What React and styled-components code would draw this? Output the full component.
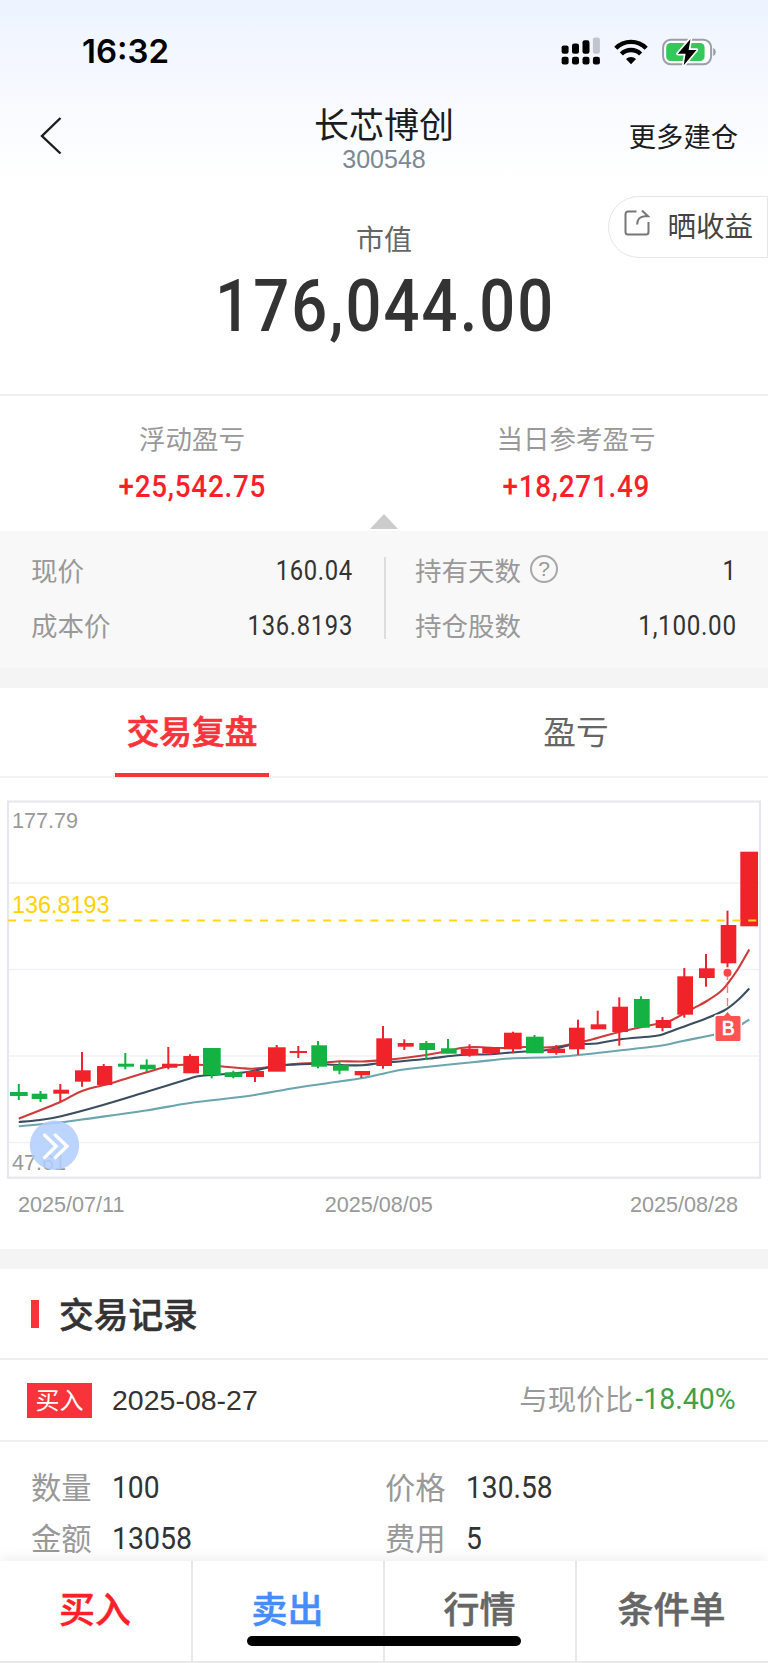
import React from 'react';
import styled, { createGlobalStyle } from 'styled-components';

const GlobalStyle = createGlobalStyle`
  * {
    box-sizing: border-box;
  }

  body {
    margin: 0;
    background: #fff;
    font-family: "Noto Sans CJK SC", sans-serif;
    color: #333;
  }
`;

const Screen = styled.div`
  width: 768px;
  height: 1663px;
  display: flex;
  flex-direction: column;
  overflow: hidden;
  background: #fff;
`;

const Header = styled.header`
  height: 182px;
  flex: none;
  background: linear-gradient(#edf4ff 0, #f2f6ff 45px, #ffffff 178px);
`;

const StatusBar = styled.div`
  height: 102px;
  padding: 0 50px 0 82px;
  display: flex;
  align-items: center;
  justify-content: space-between;
`;

const Clock = styled.span`
  font-family: Inter, sans-serif;
  font-size: 33px;
  font-weight: 600;
  line-height: 40px;
  color: #000;
`;

const StatusIcons = styled.div`
  display: flex;
  align-items: center;
  padding-top: 1px;

  svg + svg {
    margin-left: 13px;
  }

  svg:last-child {
    margin-left: 14px;
  }
`;

const NavBar = styled.div`
  height: 80px;
  padding: 0 30px 0 38px;
  display: grid;
  grid-template-columns: 120px 1fr 112px;
`;

const NavTitle = styled.div`
  text-align: center;
  padding: 0 24px 0 8px;
`;

const StockName = styled.h1`
  margin: 0;
  font-size: 35px;
  font-weight: 400;
  line-height: 42px;
  color: #1c1c1e;
`;

const StockCode = styled.div`
  font-family: "Liberation Sans", sans-serif;
  font-size: 25px;
  line-height: 30px;
  color: #7c8894;
`;

const BackButton = styled.div`
  padding-top: 14px;
`;

const NavAction = styled.div`
  font-size: 27.3px;
  line-height: 66px;
  text-align: right;
  white-space: nowrap;
  color: #1c1c1e;
`;

// condensed DIN style figures
const Figure = styled.span`
  display: inline-block;
  font-family: Roboto, sans-serif;
  font-size: ${props => props.$size || 28}px;
  font-weight: ${props => props.$weight || 400};
  letter-spacing: ${props => props.$spacing || 0}px;
  color: ${props => props.$color || '#333'};
  transform: scaleX(${props => props.$stretch || 0.85});
  transform-origin: ${props => props.$origin || 'center'} center;
  white-space: nowrap;
`;

const Summary = styled.section`
  position: relative;
  height: 214px;
  flex: none;
  padding-top: 37px;
  text-align: center;
  border-bottom: 2px solid #f0f0f0;
`;

const SummaryLabel = styled.div`
  font-size: 28px;
  line-height: 39px;
  color: #666;
`;

const SummaryValue = styled.div`
  padding-left: 3px;
  line-height: 97px;
`;

const ShareButton = styled.div`
  position: absolute;
  top: 14px;
  right: 0;
  width: 160px;
  height: 62px;
  padding: 0 14px 5px 15px;
  display: flex;
  align-items: center;
  justify-content: space-between;
  border: 1px solid #e6e6e6;
  border-radius: 31px 0 0 31px;
  background: #fff;
  font-size: 28.5px;
  color: #444;

  svg {
    margin-bottom: 3px;
  }
`;

const Profits = styled.section`
  position: relative;
  height: 135px;
  flex: none;
  padding-top: 22px;
  display: grid;
  grid-template-columns: 1fr 1fr;
  text-align: center;
`;

const ProfitLabel = styled.div`
  font-size: 26.5px;
  line-height: 40px;
  color: #999;
`;

const ProfitValue = styled.div`
  line-height: 58px;
`;

const Arrow = styled.div`
  position: absolute;
  left: 370px;
  bottom: 2px;
  border: 14px solid transparent;
  border-top: 0;
  border-bottom: 15px solid #ccc;
`;

const Holding = styled.section`
  height: 137px;
  flex: none;
  padding: 11px 31px 0 31px;
  display: grid;
  grid-template-columns: 322px 1px 1fr;
  background: #f8f8f8;
`;

const HoldingRow = styled.div`
  height: 55px;
  display: flex;
  align-items: center;
  color: #999;
  font-size: 26.5px;
`;

const HoldingColumn = styled.div`
  padding-left: ${props => props.$indent || 0}px;

  ${Figure} {
    margin-left: auto;
    padding-top: 2px;
  }
`;

const HoldingDivider = styled.div`
  width: 2px;
  height: 82px;
  margin: 15px 0 0 31px;
  background: #ddd;
`;

const Help = styled.span`
  width: 28px;
  height: 28px;
  margin: 0 0 2px 9px;
  border: 2px solid #a8a8a8;
  border-radius: 50%;
  font-family: "Liberation Sans", sans-serif;
  font-size: 21px;
  line-height: 24px;
  text-align: center;
`;

const Band = styled.div`
  height: 20px;
  flex: none;
  background: #f4f4f4;
`;

const Tabs = styled.nav`
  height: 90px;
  flex: none;
  display: grid;
  grid-template-columns: 1fr 1fr;
  justify-items: center;
  border-bottom: 2px solid #f3f3f5;
`;

const Tab = styled.div`
  width: 154px;
  height: 89px;
  line-height: 83px;
  font-size: 32.7px;
  font-weight: ${props => (props.$active ? 500 : 400)};
  color: ${props => (props.$active ? '#f9333a' : '#666')};
  border-bottom: 4px solid ${props => (props.$active ? '#f9333a' : 'transparent')};
  -webkit-text-stroke: ${props => (props.$active ? 0.7 : 0)}px;
  text-align: center;
`;

const ChartPanel = styled.section`
  height: 471px;
  flex: none;
  padding-top: 17px;
`;

const ChartSvg = styled.svg`
  display: block;
`;

const Dates = styled.div`
  padding: 0 30px 0 18px;
  display: flex;
  justify-content: space-between;
  font-family: "Liberation Sans", sans-serif;
  font-size: 21.6px;
  line-height: 40px;
  color: #999;

  span:nth-child(2) {
    padding-left: 3px;
  }
`;

const RecordTitle = styled.h2`
  height: 91px;
  flex: none;
  margin: 0;
  padding: 0 0 2px 31px;
  display: flex;
  align-items: center;
  gap: 20px;
  font-size: 34.7px;
  font-weight: 500;
  -webkit-text-stroke: 0.5px;
  border-bottom: 2px solid #eee;

  &::before {
    content: "";
    width: 8px;
    height: 28px;
    margin-top: 2px;
    background: #f9333a;
  }
`;

const RecordHead = styled.div`
  height: 82px;
  flex: none;
  padding: 0 32px 0 27px;
  display: flex;
  align-items: center;
  border-bottom: 2px solid #f0f0f0;
`;

const Badge = styled.span`
  width: 65px;
  height: 35px;
  line-height: 32px;
  text-align: center;
  background: #f9333a;
  color: #fff;
  font-size: 24px;
`;

const RecordDate = styled.span`
  margin: 0 auto 0 20px;
  font-family: "Liberation Sans", sans-serif;
  font-size: 28.5px;
`;

const Compare = styled.span`
  display: flex;
  align-items: center;
  padding-bottom: 6px;
  font-size: 28.5px;
  color: #999;

  ${Figure} {
    margin-left: -3px;
    padding-top: 2px;
  }
`;

const RecordBody = styled.div`
  flex: 1;
  min-height: 0;
  overflow: hidden;
  padding: 18px 31px 0;
  display: grid;
  grid-template-columns: 354px 1fr;
  grid-auto-rows: 51px;
  align-content: start;
`;

const Field = styled.div`
  display: flex;
  align-items: center;
  gap: 20px;
  font-size: 30.3px;
  color: #999;

  ${Figure} {
    padding-top: 3px;
  }
`;

const BottomBar = styled.footer`
  position: relative;
  height: 102px;
  flex: none;
  display: grid;
  grid-template-columns: repeat(4, 1fr);
  background: #fff;
  border-bottom: 2px solid #e8e8e8;
  box-shadow: 0 -3px 12px rgba(0, 0, 0, 0.07);
`;

const BottomItem = styled.div`
  padding-right: 2px;
  line-height: 93px;
  text-align: center;
  font-size: 36px;
  font-weight: 500;
  -webkit-text-stroke: 0.5px;
  color: ${props => props.$color || '#666'};

  & + & {
    margin-left: -1px;
    border-left: 2px solid #e8e8e8;
  }
`;

const HomeIndicator = styled.span`
  position: absolute;
  left: 247px;
  bottom: 15px;
  width: 274px;
  height: 10px;
  border-radius: 5px;
  background: #000;
`;

const RED = '#f0232b';
const GREEN = '#14b143';

// left, right, top, bottom of the body, then wick x, high, low
const candles = [
  [GREEN, 10, 27.7, 1092, 1096, 18.8, 1084, 1100],
  [GREEN, 31.7, 47.3, 1093.7, 1099, 40.5, 1091, 1102],
  [RED, 53.3, 69, 1089.7, 1093.7, 60.3, 1084, 1102],
  [RED, 75, 90.7, 1070.3, 1081.7, 82, 1052, 1086.7],
  [RED, 97, 112.3, 1066, 1085, 103.7, 1064, 1085],
  [GREEN, 118, 134, 1063.7, 1066.7, 125.3, 1053, 1069.3],
  [GREEN, 140, 155.7, 1064.7, 1069.3, 146.7, 1059.3, 1072],
  [RED, 162, 177.3, 1063.7, 1067.7, 168.3, 1047, 1069.3],
  [RED, 183.3, 199, 1056, 1073.3, 190, 1054.3, 1073],
  [GREEN, 203, 220.7, 1048, 1075, 211.7, 1048, 1078.3],
  [GREEN, 224.7, 242.3, 1072.3, 1077, 233.3, 1070.7, 1078.3],
  [RED, 246, 264, 1071, 1077, 255, 1069, 1082],
  [RED, 268, 285.7, 1047.3, 1071.7, 276.7, 1045, 1071],
  [RED, 289.7, 307, 1051, 1053, 298.3, 1046, 1058],
  [GREEN, 311.3, 327, 1045.3, 1066.7, 318, 1041, 1068.3],
  [GREEN, 333, 348.7, 1065, 1070.7, 339.5, 1062, 1074.3],
  [RED, 354.7, 370, 1071, 1075.3, 361.3, 1071, 1078],
  [RED, 376.3, 392, 1038.3, 1066, 383, 1026, 1068.7],
  [RED, 397.7, 413.7, 1043, 1046.7, 404.3, 1039.3, 1050],
  [GREEN, 419.3, 435, 1043, 1050, 426.3, 1041, 1060],
  [GREEN, 441, 456.7, 1048.3, 1053.7, 448, 1039, 1053],
  [RED, 460.7, 478.3, 1048.7, 1055, 469.5, 1044.3, 1056.7],
  [RED, 482.3, 500, 1047, 1053.3, 491, 1047, 1055],
  [RED, 504, 521.7, 1032.7, 1049.3, 513, 1031.7, 1053.3],
  [GREEN, 526, 543.7, 1036.7, 1053.3, 534.5, 1035, 1053],
  [RED, 547.3, 565, 1048.7, 1053, 556.3, 1045, 1054.7],
  [RED, 569, 584.7, 1027.7, 1049.3, 578, 1019.7, 1054.7],
  [RED, 590.7, 606.3, 1024.3, 1029.3, 597.7, 1010.7, 1029],
  [RED, 612.3, 628, 1006.7, 1032, 619.3, 997.3, 1045.7],
  [GREEN, 634, 649.7, 999, 1027.7, 641, 996.3, 1027],
  [RED, 655.7, 671.3, 1020, 1028, 662.5, 1017, 1031.3],
  [RED, 677.3, 693, 976.3, 1014.7, 684.3, 968, 1017.7],
  [RED, 699, 714.7, 968.3, 978, 706, 954, 986.7],
  [RED, 720.7, 736.3, 925, 963.3, 727.5, 910.7, 967.3],
  [RED, 740.3, 758, 851.7, 926.3, 749, 852, 926]
];

const averages = [
  {
    color: '#cf3b3b',
    points: [[18.8, 1118.7], [60.3, 1102], [82, 1091], [112, 1083], [146, 1072.5], [168, 1066.5], [190, 1064.5], [220, 1066.3], [240, 1068], [255, 1068.5], [290, 1064.5], [327, 1062.3], [340, 1061.3], [362, 1061.5], [383, 1060], [404, 1058], [426, 1055], [448, 1051], [461, 1048], [475, 1047], [500, 1048], [525, 1047], [545, 1047.5], [563, 1045.7], [590, 1040], [619, 1032], [649, 1025.5], [662, 1023], [672, 1020], [693, 1008.5], [706, 1001.5], [720, 992], [727, 984.5], [738, 969], [749.3, 949.5]]
  },
  {
    color: '#3b4d60',
    points: [[18.8, 1122], [40, 1120], [60, 1116.5], [103, 1105], [146, 1092], [190, 1078.5], [200, 1076], [220, 1074.5], [243, 1072.5], [262, 1069], [275, 1066], [290, 1064.7], [311, 1064], [340, 1065], [362, 1065.3], [380, 1063], [404, 1061], [430, 1058.5], [461, 1055], [490, 1054.3], [505, 1053], [525, 1051.5], [548, 1050], [570, 1045], [580, 1044], [597, 1043.5], [619, 1039.5], [655, 1036], [665, 1033.5], [680, 1028], [706, 1018.5], [725, 1010], [738, 1000], [749.3, 988.5]]
  },
  {
    color: '#6ba5ad',
    points: [[18.8, 1126.3], [60, 1122.5], [82, 1119.5], [146, 1110.5], [190, 1103], [250, 1095.7], [298, 1087.5], [361, 1078.3], [400, 1070], [426, 1067], [475, 1062], [510, 1058.5], [556, 1057], [597, 1053], [619, 1050.5], [662, 1045.5], [684, 1040.7], [713, 1035], [728, 1030.5], [743, 1023.5], [749.3, 1019.5]]
  }
];

const smoothPath = (points) => {
  let d = `M${points[0][0]} ${points[0][1]}`;
  for (let i = 0; i < points.length - 1; i++) {
    const p0 = points[i - 1] || points[i];
    const p1 = points[i];
    const p2 = points[i + 1];
    const p3 = points[i + 2] || p2;
    d += `C${p1[0] + (p2[0] - p0[0]) / 6} ${p1[1] + (p2[1] - p0[1]) / 6} ${p2[0] - (p3[0] - p1[0]) / 6} ${p2[1] - (p3[1] - p1[1]) / 6} ${p2[0]} ${p2[1]}`;
  }
  return d;
};

const SignalIcon = () => (
  <svg width="40" height="29" viewBox="0 0 40 29">
    <rect x="0.6" y="8.4" width="7" height="8.4" rx="2.2" />
    <rect x="11" y="6.4" width="7" height="10.4" rx="2.2" />
    <rect x="21.5" y="3.2" width="7" height="13.6" rx="2.2" />
    <rect x="31.9" y="0.4" width="7" height="16.4" rx="2.2" fill="#c2c5cb" />
    {[0.6, 11, 21.5, 31.9].map(x => (
      <rect key={x} x={x} y="19.8" width="7" height="7.6" rx="2.2" />
    ))}
  </svg>
);

const WifiIcon = () => (
  <svg width="34" height="26" viewBox="0 0 34 26">
    <g fill="none" stroke="#000" strokeWidth="4.4">
      <path d="M1.8 9.2a21.5 21.5 0 0 1 30.4 0" />
      <path d="M7.4 15a13.6 13.6 0 0 1 19.2 0" />
    </g>
    <path d="M17 25.2l-5-5.1a7.2 7.2 0 0 1 10 0z" />
  </svg>
);

const BatteryIcon = () => (
  <svg width="56" height="28" viewBox="0 0 56 28">
    <rect x="1.1" y="1.8" width="48" height="24.4" rx="7.6" fill="#fff" stroke="#9a9fa6" strokeWidth="2" />
    <rect x="4.2" y="5" width="38.4" height="18" rx="4.6" fill="#34c759" />
    <path d="M51.2 10v8c3.4-1.2 3.4-6.8 0-8z" fill="#9a9fa6" />
    <path
      d="M28.5 0.9L15.8 15.8h7.8l-1.9 11.4 12.8-15.3h-7.9z"
      stroke="#fff"
      strokeWidth="3.4"
      strokeLinejoin="round"
      paintOrder="stroke"
    />
  </svg>
);

const ShareIcon = () => (
  <svg width="27" height="28" viewBox="0 0 27 28" fill="none" stroke="#777" strokeWidth="2">
    <path d="M12.5 2.5H4a2.5 2.5 0 0 0-2.5 2.5v18A2.5 2.5 0 0 0 4 25.5h18a2.5 2.5 0 0 0 2.5-2.5V13" />
    <path d="M18 1.5l6 5.7H21c-5 0-7.8 3.2-7.8 8.3" />
  </svg>
);

const Chart = () => (
  <ChartSvg width="768" height="390" viewBox="0 795 768 390">
    <rect x="8" y="801.5" width="752" height="376.2" fill="none" stroke="#e7e7ee" strokeWidth="2.2" />
    {[883, 969.5, 1056, 1142.5].map(y => (
      <path key={y} d={`M9 ${y}H759`} stroke="#f0f0f6" strokeWidth="1.6" />
    ))}
    <g fontFamily="Liberation Sans, sans-serif" fontSize="21.6" fill="#999">
      <text x="12" y="827.6">177.79</text>
      <text x="12" y="1169.6">47.61</text>
      <text x="12" y="912.8" fontSize="23.4" fill="#ffd200">136.8193</text>
    </g>
    {averages.map(line => (
      <path key={line.color} d={smoothPath(line.points)} fill="none" stroke={line.color} strokeWidth="2.1" />
    ))}
    {candles.map(([color, left, right, top, bottom, x, high, low]) => (
      <g key={x} fill={color}>
        <rect x={left} y={top} width={right - left} height={bottom - top} />
        <rect x={x - 1} y={high} width="2" height={low - high} />
      </g>
    ))}
    <path d="M8 920.5H758" stroke="#ffd61a" strokeWidth="2.2" strokeDasharray="8 7.75" />
    <path d="M727.5 972V1013" stroke="#ff7a7a" strokeWidth="1.4" strokeDasharray="8 5" />
    <circle cx="727.5" cy="972.8" r="4" fill="#ff4646" />
    <path
      d="M717 1016h7l3.5-4 3.5 4h8a1.5 1.5 0 0 1 1.5 1.5v22a1.5 1.5 0 0 1-1.5 1.5h-22a1.5 1.5 0 0 1-1.5-1.5v-22a1.5 1.5 0 0 1 1.5-1.5z"
      fill="#ff5252"
      stroke="#fff"
      strokeWidth="3"
      paintOrder="stroke"
    />
    <text x="728.2" y="1035.3" textAnchor="middle" fontFamily="Liberation Sans, sans-serif" fontSize="19.5" fill="#fff" stroke="#fff" strokeWidth="0.7">B</text>
    <circle cx="54.5" cy="1145.3" r="24.7" fill="#b2cfff" fillOpacity="0.87" />
    <path d="M44.5 1135l11.7 11.3-11.7 11.3M55.3 1135l11.7 11.3-11.7 11.3" fill="none" stroke="#fff" strokeWidth="3.4" strokeLinecap="round" />
  </ChartSvg>
);

const App = () => (
  <Screen>
    <GlobalStyle />
    <Header>
      <StatusBar>
        <Clock>16:32</Clock>
        <StatusIcons>
          <SignalIcon />
          <WifiIcon />
          <BatteryIcon />
        </StatusIcons>
      </StatusBar>
      <NavBar>
        <BackButton>
          <svg width="26" height="40" viewBox="0 0 26 40" fill="none" stroke="#1c1c1e" strokeWidth="2.4">
            <path d="M22.5 2L4 20l18.5 17.5" />
          </svg>
        </BackButton>
        <NavTitle>
          <StockName>长芯博创</StockName>
          <StockCode>300548</StockCode>
        </NavTitle>
        <NavAction>更多建仓</NavAction>
      </NavBar>
    </Header>

    <Summary>
      <SummaryLabel>市值</SummaryLabel>
      <SummaryValue>
        <Figure $size={73} $weight={500} $stretch={0.867} $spacing={2.4}>176,044.00</Figure>
      </SummaryValue>
      <ShareButton>
        <ShareIcon />
        晒收益
      </ShareButton>
    </Summary>

    <Profits>
      <div>
        <ProfitLabel>浮动盈亏</ProfitLabel>
        <ProfitValue>
          <Figure $size={31.5} $weight={500} $stretch={0.885} $color="#ff1f28" $spacing={0.8}>+25,542.75</Figure>
        </ProfitValue>
      </div>
      <div>
        <ProfitLabel>当日参考盈亏</ProfitLabel>
        <ProfitValue>
          <Figure $size={31.5} $weight={500} $stretch={0.885} $color="#ff1f28" $spacing={0.8}>+18,271.49</Figure>
        </ProfitValue>
      </div>
      <Arrow />
    </Profits>

    <Holding>
      <HoldingColumn>
        <HoldingRow>
          现价<Figure $origin="right" $spacing={0.8}>160.04</Figure>
        </HoldingRow>
        <HoldingRow>
          成本价<Figure $origin="right" $spacing={0.8}>136.8193</Figure>
        </HoldingRow>
      </HoldingColumn>
      <HoldingDivider />
      <HoldingColumn $indent={61}>
        <HoldingRow>
          持有天数<Help>?</Help><Figure $origin="right" $spacing={0.8}>1</Figure>
        </HoldingRow>
        <HoldingRow>
          持仓股数<Figure $origin="right" $stretch={0.865} $spacing={0.8}>1,100.00</Figure>
        </HoldingRow>
      </HoldingColumn>
    </Holding>
    <Band />

    <Tabs>
      <Tab $active>交易复盘</Tab>
      <Tab>盈亏</Tab>
    </Tabs>
    <ChartPanel>
      <Chart />
      <Dates>
        <span>2025/07/11</span>
        <span>2025/08/05</span>
        <span>2025/08/28</span>
      </Dates>
    </ChartPanel>
    <Band />

    <RecordTitle>交易记录</RecordTitle>
    <RecordHead>
      <Badge>买入</Badge>
      <RecordDate>2025-08-27</RecordDate>
      <Compare>
        与现价比
        <Figure $size={30} $stretch={0.95} $color="#43a047" $origin="right">-18.40%</Figure>
      </Compare>
    </RecordHead>
    <RecordBody>
      <Field>数量<Figure $size={31} $stretch={0.91} $origin="left">100</Figure></Field>
      <Field>价格<Figure $size={31} $stretch={0.91} $origin="left">130.58</Figure></Field>
      <Field>金额<Figure $size={31} $stretch={0.92} $origin="left">13058</Figure></Field>
      <Field>费用<Figure $size={31} $stretch={0.91} $origin="left">5</Figure></Field>
    </RecordBody>

    <BottomBar>
      <BottomItem $color="#ff1f28">买入</BottomItem>
      <BottomItem $color="#468cff">卖出</BottomItem>
      <BottomItem>行情</BottomItem>
      <BottomItem>条件单</BottomItem>
      <HomeIndicator />
    </BottomBar>
  </Screen>
);

export default App;
